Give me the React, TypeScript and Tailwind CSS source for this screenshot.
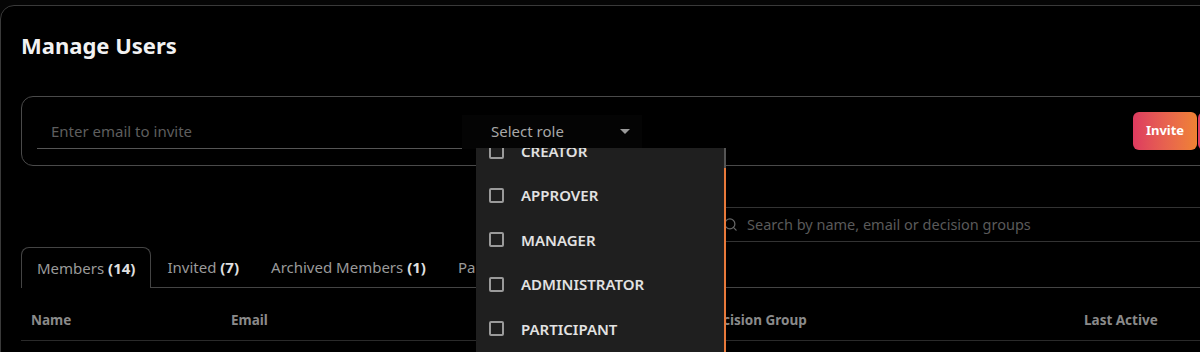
import { Search } from 'lucide-react';

const roles = ['CREATOR', 'APPROVER', 'MANAGER', 'ADMINISTRATOR', 'PARTICIPANT'];

const tabs = [
  { label: 'Invited', count: 7 },
  { label: 'Archived Members', count: 1 },
  { label: 'Participants', count: 3 },
];

const RoleMenu = () => {
  return (
    <div className="absolute left-[476px] top-[148px] w-[250px] h-[220px] bg-[#1f1f1f] overflow-hidden flex">
      <div className="flex-1 -mt-[19px]">
        {roles.map((role) => (
          <div key={role} className="h-[44.4px] flex items-center pl-[13px] gap-[17px]">
            <span className="w-[15px] h-[15px] border-2 border-[#9a9a9a] rounded-[2px]" />
            <span className="text-[15px] font-semibold text-[#e2e2e2]">{role}</span>
          </div>
        ))}
      </div>
      <div className="w-[2px] flex flex-col">
        <div className="h-[20px] bg-[#555]" />
        <div className="flex-1 bg-[#e8793a]" />
      </div>
    </div>
  );
};

export default function App() {
  return (
    <div
      className="w-[1200px] h-[352px] bg-[#050505] overflow-hidden relative"
      style={{ fontFamily: '"Noto Sans", "Open Sans", sans-serif' }}
    >
      <div className="mt-[5px] w-[1260px] h-[400px] bg-black border border-[#3a3a3a] rounded-tl-[14px] pl-[20px]">
        <h1 className="pt-[24px] text-[22px] leading-[30px] font-bold text-[#f2f2f2]">Manage Users</h1>

        <div className="mt-[36px] h-[70px] border border-[#4a4a4a] rounded-[12px] flex items-center pl-[15px]">
          <div className="w-[425px] h-[34px] mt-[1px] border-b border-[#555] flex items-center pl-[14px]">
            <span className="text-[15px] text-[#5e5e5e]">Enter email to invite</span>
          </div>
          <div className="w-[180px] h-[34px] mt-[1px] bg-[#040404] flex items-center justify-between pl-[29px] pr-[12px]">
            <span className="text-[15px] text-[#a8a8a8]">Select role</span>
            <span className="w-0 h-0 border-l-[5px] border-r-[5px] border-t-[5px] border-l-transparent border-r-transparent border-t-[#9a9a9a]" />
          </div>
          <div className="flex-1" />
          <button className="w-[64px] h-[38px] rounded-[6px] bg-gradient-to-r from-[#dd3a5f] to-[#f08232] text-white text-[13px] font-bold">
            Invite
          </button>
          <div className="ml-[1px] w-[60px] h-[38px] rounded-l-[6px] bg-[#e03a60]" />
        </div>

        <div className="mt-[41px] ml-[680px] h-[35px] border-y border-[#333] flex items-center gap-[9px] pl-[22px]">
          <Search size={15} className="text-[#666]" />
          <span className="text-[14.5px] text-[#5a5a5a]">Search by name, email or decision groups</span>
        </div>

        <div className="mt-[5px] flex h-[41px] text-[15px] text-[#9a9a9a]">
          <div className="h-full px-[15px] flex items-center border border-b-0 border-[#444] rounded-t-[8px]">
            Members&nbsp;<b className="text-[#e0e0e0]">(14)</b>
          </div>
          <div className="flex-1 flex border-b border-[#444]">
            {tabs.map((t) => (
              <div key={t.label} className="h-full px-[16px] flex items-center">
                {t.label}&nbsp;<b className="text-[#e0e0e0]">({t.count})</b>
              </div>
            ))}
          </div>
        </div>

        <div className="mt-[13px] h-[40px] border-b border-[#2a2a2a] flex items-center text-[13.5px] font-bold text-[#8a8a8a]">
          <span className="w-[200px] pl-[10px]">Name</span>
          <span className="w-[484px] pl-[10px]">Email</span>
          <span className="w-[379px]">Decision Group</span>
          <span>Last Active</span>
        </div>
      </div>

      <RoleMenu />
    </div>
  );
}
